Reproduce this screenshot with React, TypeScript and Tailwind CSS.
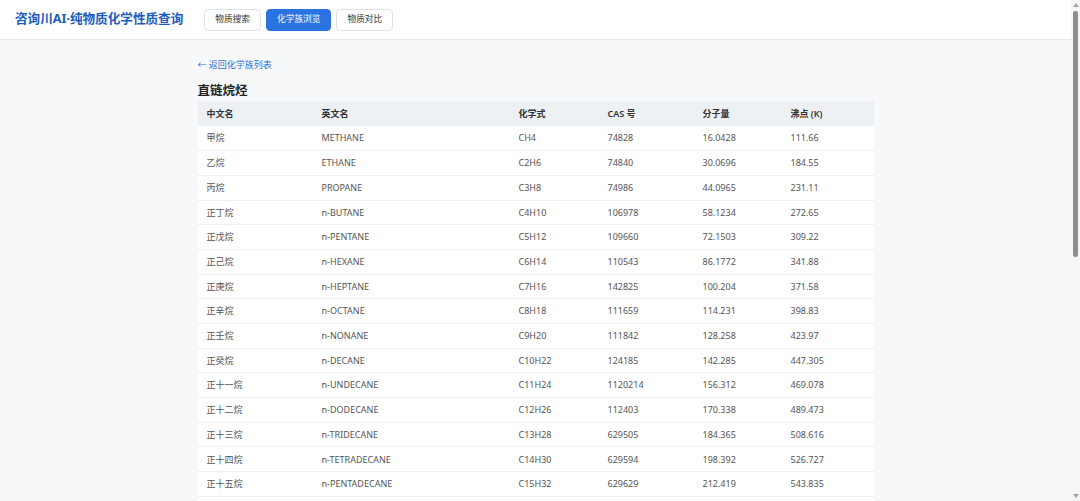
import React from 'react';

type Row = [string, string, string, string, string, string];

const rows: Row[] = [
  ['甲烷', 'METHANE', 'CH4', '74828', '16.0428', '111.66'],
  ['乙烷', 'ETHANE', 'C2H6', '74840', '30.0696', '184.55'],
  ['丙烷', 'PROPANE', 'C3H8', '74986', '44.0965', '231.11'],
  ['正丁烷', 'n-BUTANE', 'C4H10', '106978', '58.1234', '272.65'],
  ['正戊烷', 'n-PENTANE', 'C5H12', '109660', '72.1503', '309.22'],
  ['正己烷', 'n-HEXANE', 'C6H14', '110543', '86.1772', '341.88'],
  ['正庚烷', 'n-HEPTANE', 'C7H16', '142825', '100.204', '371.58'],
  ['正辛烷', 'n-OCTANE', 'C8H18', '111659', '114.231', '398.83'],
  ['正壬烷', 'n-NONANE', 'C9H20', '111842', '128.258', '423.97'],
  ['正癸烷', 'n-DECANE', 'C10H22', '124185', '142.285', '447.305'],
  ['正十一烷', 'n-UNDECANE', 'C11H24', '1120214', '156.312', '469.078'],
  ['正十二烷', 'n-DODECANE', 'C12H26', '112403', '170.338', '489.473'],
  ['正十三烷', 'n-TRIDECANE', 'C13H28', '629505', '184.365', '508.616'],
  ['正十四烷', 'n-TETRADECANE', 'C14H30', '629594', '198.392', '526.727'],
  ['正十五烷', 'n-PENTADECANE', 'C15H32', '629629', '212.419', '543.835'],
  ['正十六烷', 'n-HEXADECANE', 'C16H34', '544763', '226.446', '560.014'],
  ['正十七烷', 'n-HEPTADECANE', 'C17H36', '629787', '240.473', '575.3'],
  ['正十八烷', 'n-OCTADECANE', 'C18H38', '593453', '254.5', '589.86'],
  ['正十九烷', 'n-NONADECANE', 'C19H40', '629925', '268.527', '603.05'],
  ['正二十烷', 'n-EICOSANE', 'C20H42', '112958', '282.553', '616.93'],
  ['正二十一烷', 'n-HENEICOSANE', 'C21H44', '629947', '296.58', '629.65'],
  ['正二十二烷', 'n-DOCOSANE', 'C22H46', '629970', '310.607', '641.75'],
  ['正二十三烷', 'n-TRICOSANE', 'C23H48', '638675', '324.634', '653.35'],
  ['正二十四烷', 'n-TETRACOSANE', 'C24H50', '646311', '338.661', '664.45'],
  ['正二十五烷', 'n-PENTACOSANE', 'C25H52', '629992', '352.688', '675.05'],
  ['正二十六烷', 'n-HEXACOSANE', 'C26H54', '630013', '366.715', '685.35'],
  ['正二十七烷', 'n-HEPTACOSANE', 'C27H56', '593497', '380.741', '695.25'],
  ['正二十八烷', 'n-OCTACOSANE', 'C28H58', '630024', '394.768', '704.75'],
  ['正二十九烷', 'n-NONACOSANE', 'C29H60', '630035', '408.795', '713.95'],
  ['正三十烷', 'n-TRIACONTANE', 'C30H62', '638686', '422.822', '722.85'],
];

const headers = ['中文名', '英文名', '化学式', 'CAS 号', '分子量', '沸点 (K)'];
const widths = ['w-[115px]', 'w-[197px]', 'w-[89px]', 'w-[95px]', 'w-[88px]', 'w-[92px]'];

// 窗口右侧的滚动条
function FakeScrollbar() {
  return (
    <div className="fixed top-0 right-0 h-screen w-[9px] bg-[#f6f6f6] flex flex-col items-center">
      <span className="mt-[3px] w-0 h-0 border-x-[3px] border-x-transparent border-b-[4px] border-b-[#a3a3a3]" />
      <span className="mt-[4px] w-[5px] h-[246px] rounded-full bg-[#8d8d8d]" />
      <span className="mt-auto mb-[3px] w-0 h-0 border-x-[3px] border-x-transparent border-t-[4px] border-t-[#a3a3a3]" />
    </div>
  );
}

export default function App() {
  return (
    <div className="min-h-screen bg-[#f7f8fa] pr-[9px] font-['Noto_Sans','Noto_Sans_CJK_SC',sans-serif]">
      {/* 顶部导航 */}
      <header className="h-[40px] bg-white border-b border-[#e6e8eb] flex items-center px-[15px]">
        <h1 className="text-[12.6px] font-bold text-[#1d5cbd]">咨询川AI·纯物质化学性质查询</h1>
        <nav className="flex items-center gap-[5px] ml-[21px]">
          <button className="h-[22px] px-[10px] rounded-[4px] border border-[#dfe2e6] bg-white text-[8.7px] text-[#333]">物质搜索</button>
          <button className="h-[22px] px-[10px] rounded-[4px] border border-[#2b73e0] bg-[#2b73e0] text-[8.7px] text-white">化学族浏览</button>
          <button className="h-[22px] px-[10px] rounded-[4px] border border-[#dfe2e6] bg-white text-[8.7px] text-[#333]">物质对比</button>
        </nav>
      </header>

      <main className="w-[676px] mx-auto pt-[18px] pb-[40px]">
        <a href="#" className="text-[9px] text-[#2e6fd6] leading-[14px] block">← 返回化学族列表</a>
        <h2 className="text-[12.5px] font-bold text-[#222] mt-[10px] mb-[1px] leading-[18px]">直链烷烃</h2>

        <table className="w-full table-fixed border-collapse bg-white">
          <colgroup>
            {widths.map((w) => (
              <col key={w} className={w} />
            ))}
          </colgroup>
          <thead>
            <tr className="bg-[#eef1f4]">
              {headers.map((h) => (
                <th key={h} className="h-[25px] px-[9px] text-left text-[9px] font-semibold text-[#333]">
                  {h}
                </th>
              ))}
            </tr>
          </thead>
          <tbody>
            {rows.map((r) => (
              <tr key={r[1]} className="border-b border-[#eceef1]">
                {r.map((c, i) => (
                  <td key={i} className="h-[24.7px] px-[9px] text-[9px] text-[#555] whitespace-nowrap">
                    {c}
                  </td>
                ))}
              </tr>
            ))}
          </tbody>
        </table>
      </main>

      <FakeScrollbar />
    </div>
  );
}
